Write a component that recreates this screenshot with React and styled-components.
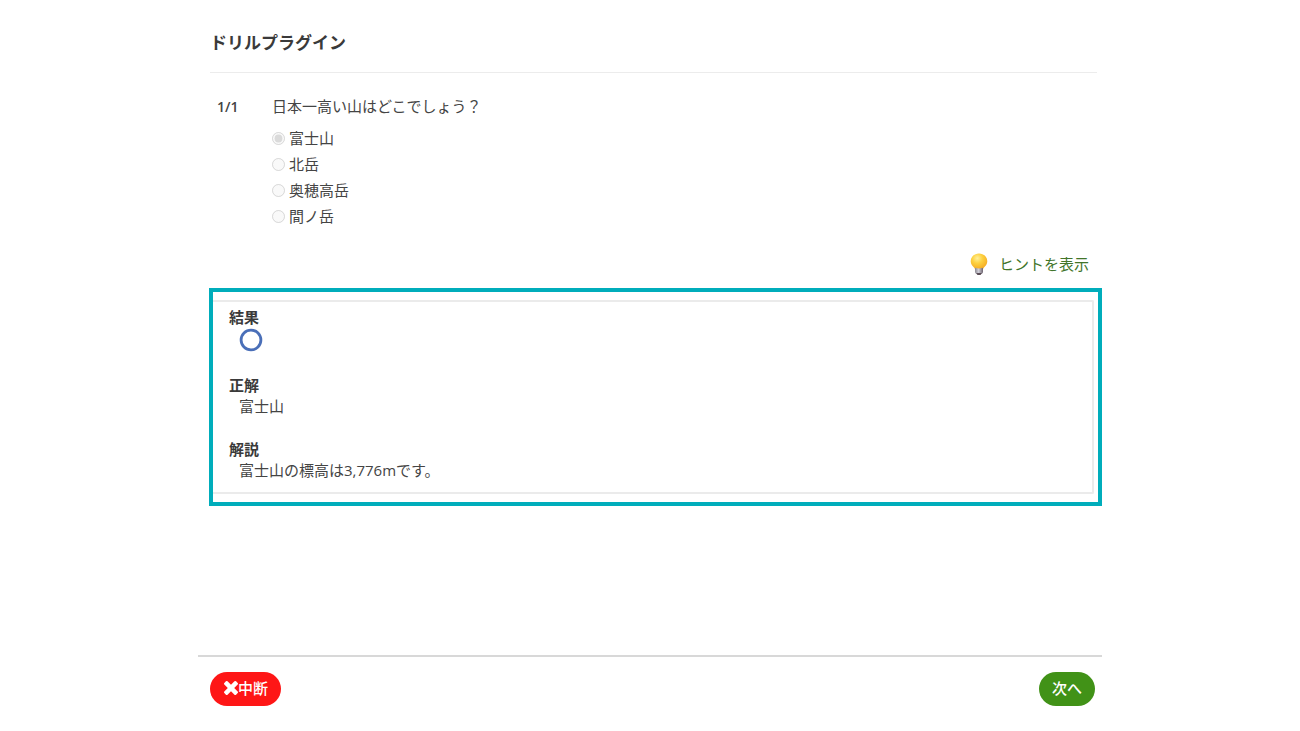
import styled, { createGlobalStyle } from "styled-components";

const choices = ["富士山", "北岳", "奥穂高岳", "間ノ岳"];

const BulbIcon = () => (
  <svg width="18" height="22" viewBox="0 0 18 22" aria-hidden="true">
    <defs>
      <radialGradient id="bulbGlow" cx="0.4" cy="0.3" r="0.7">
        <stop offset="0" stopColor="#fff09a" />
        <stop offset="0.45" stopColor="#fdd140" />
        <stop offset="1" stopColor="#f5ab22" />
      </radialGradient>
      <linearGradient id="bulbBase" x1="0" x2="1">
        <stop offset="0" stopColor="#8c8a92" />
        <stop offset="0.45" stopColor="#d0cfd8" />
        <stop offset="1" stopColor="#6d6470" />
      </linearGradient>
    </defs>
    <path
      d="M9 .5C4.300.5.700 3.900.700 8.200c0 3 1.800 4.700 3.300 6.300.7.700.9 1.400 1 2h8c.1-.6.3-1.300 1-2 1.500-1.600 3.300-3.300 3.300-6.300C17.300 3.900 13.700.5 9 .5z"
      fill="url(#bulbGlow)"
    />
    <path d="M5 14.800q4 1.600 8 0v4c0 1.600-1.600 2.900-4 2.900s-4-1.300-4-2.900z" fill="url(#bulbBase)" />
    <path d="M6.200 20h5.600L10.500 22h-3z" fill="#5b4d55" />
  </svg>
);

const CircleMark = () => (
  <svg width="24" height="24" viewBox="0 0 24 24" role="img" aria-label="正解">
    <circle cx="12" cy="12" r="9.900" fill="none" stroke="#4a6fb8" strokeWidth="2.800" />
  </svg>
);

const CrossIcon = () => (
  <svg width="14" height="14" viewBox="110 366 1188 1188" fill="currentColor" aria-hidden="true">
    <path d="M1298 1322q0 40-28 68l-136 136q-28 28-68 28t-68-28l-294-294-294 294q-28 28-68 28t-68-28l-136-136q-28-28-28-68t28-68l294-294-294-294q-28-28-28-68t28-68l136-136q28-28 68-28t68 28l294 294 294-294q28-28 68-28t68 28l136 136q28 28 28 68t-28 68l-294 294 294 294q28 28 28 68z" />
  </svg>
);

const App = () => {
  return (
    <>
      <GlobalStyle />
      <Page>
        <Header>
          <h1>ドリルプラグイン</h1>
        </Header>
        <Main>
          <Question>
            <QuestionNumber>1/1</QuestionNumber>
            <Choices>
              <legend>日本一高い山はどこでしょう？</legend>
              {choices.map((choice, index) => (
                <Choice key={choice}>
                  <input type="radio" name="answer" defaultChecked={index === 0} disabled />
                  {choice}
                </Choice>
              ))}
            </Choices>
          </Question>
          <HintLink href="#hint">
            <BulbIcon />
            ヒントを表示
          </HintLink>
          <ResultFrame>
            <ResultPanel>
              <dt>結果</dt>
              <MarkRow>
                <CircleMark />
              </MarkRow>
              <dt>正解</dt>
              <dd>富士山</dd>
              <dt>解説</dt>
              <dd>富士山の標高は3,776mです。</dd>
            </ResultPanel>
          </ResultFrame>
        </Main>
        <Footer>
          <RoundButton type="button" $color="#fe1616">
            <CrossIcon />
            中断
          </RoundButton>
          <RoundButton type="button" $color="#419217">
            次へ
          </RoundButton>
        </Footer>
      </Page>
    </>
  );
};

const GlobalStyle = createGlobalStyle`
  * {
    box-sizing: border-box;
  }

  body {
    margin: 0;
    background: #ffffff;
    color: #444444;
    font-family: "Open Sans", "Noto Sans CJK JP", sans-serif;
    font-size: 15px;
    line-height: 21px;
  }
`;

const Page = styled.div`
  display: flex;
  flex-direction: column;
  width: 100%;
  max-width: 904px;
  min-height: 100vh;
  margin: 0 auto;
`;

const Header = styled.header`
  margin: 0 5px 0 12px;
  padding: 31px 0 17px;
  border-bottom: 1px solid #ececec;

  h1 {
    margin: 0;
    font-size: 17px;
    font-weight: 700;
    line-height: 24px;
    color: #3a3a3a;
  }
`;

const Main = styled.main`
  display: flex;
  flex: 1;
  flex-direction: column;
  padding: 23px 0 24px 11px;
`;

const Question = styled.div`
  display: flex;
  padding-left: 8px;
`;

const QuestionNumber = styled.div`
  width: 55px;
  font-size: 14px;
  font-weight: 600;
`;

const Choices = styled.fieldset`
  margin: 0;
  padding: 0;
  border: 0;

  legend {
    padding: 0;
    margin-bottom: 8px;
  }
`;

const Choice = styled.label`
  display: flex;
  align-items: center;
  gap: 4px;
  height: 26px;

  input {
    width: 13px;
    height: 13px;
    margin: 0;
    opacity: 0.8;
  }
`;

const HintLink = styled.a`
  display: flex;
  align-items: center;
  align-self: flex-end;
  gap: 11px;
  margin: 24px 13px 13px 0;
  color: #42752a;
  text-decoration: none;
`;

const ResultFrame = styled.section`
  padding: 8px 4px 8px 0;
  border: 4px solid #00adbb;
`;

const ResultPanel = styled.dl`
  margin: 0;
  padding: 5px 16px 11px;
  border: 2px solid #ebebeb;
  border-left: 0;
  border-radius: 0 2px 2px 0;

  dt {
    font-weight: 700;
    color: #3a3a3a;
  }

  dd {
    margin: 0 0 22px 10px;
  }

  dd:last-child {
    margin-bottom: 0;
  }
`;

const MarkRow = styled.dd`
  display: flex;
  height: 25px;
`;

const Footer = styled.footer`
  display: flex;
  justify-content: space-between;
  align-items: flex-start;
  height: 76px;
  padding: 15px 7px 0 12px;
  border-top: 2px solid #d8d8d8;
`;

const RoundButton = styled.button`
  display: flex;
  align-items: center;
  height: 34px;
  padding: 0 13px 2px;
  border: 0;
  border-radius: 17px;
  background: ${(props) => props.$color};
  color: #ffffff;
  font: inherit;
  font-weight: 500;
  cursor: pointer;

  svg {
    margin-left: 1px;
  }
`;

export default App;
